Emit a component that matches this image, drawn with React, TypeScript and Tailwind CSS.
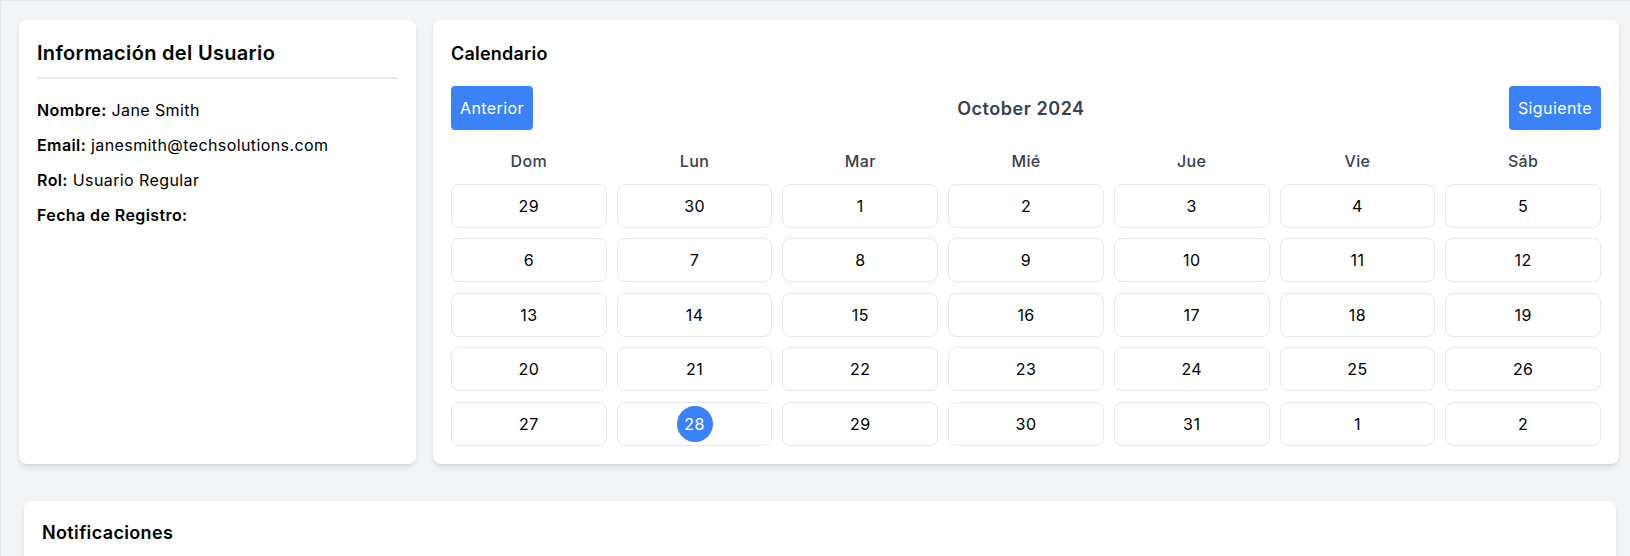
import React from "react";

const font = { fontFamily: "Inter, 'Noto Sans', sans-serif" };

const days = ["Dom", "Lun", "Mar", "Mié", "Jue", "Vie", "Sáb"];
const cells = [
  29, 30, 1, 2, 3, 4, 5,
  6, 7, 8, 9, 10, 11, 12,
  13, 14, 15, 16, 17, 18, 19,
  20, 21, 22, 23, 24, 25, 26,
  27, 28, 29, 30, 31, 1, 2,
];

export default function App() {
  return (
    <div
      className="min-h-screen bg-[#f3f4f6] border-t border-l border-[#e5e7eb] pt-[19px] pl-[18px] pr-[11px] text-black tracking-[0.025em]"
      style={font}
    >
      <div className="flex gap-[17px] items-stretch">
        <div className="w-[397px] shrink-0 bg-white rounded-lg shadow-md p-[18px]">
          <h2 className="text-[20px] leading-7 font-semibold tracking-[0.016em] pt-px pb-[10px] border-b-2 border-[#e5e7eb]">
            Información del Usuario
          </h2>
          <div className="mt-[19px] flex flex-col gap-[11px] text-[16px] leading-6">
            <p>
              <span className="font-semibold">Nombre:</span> Jane Smith
            </p>
            <p>
              <span className="font-semibold">Email:</span> janesmith@techsolutions.com
            </p>
            <p>
              <span className="font-semibold">Rol:</span> Usuario Regular
            </p>
            <p>
              <span className="font-semibold">Fecha de Registro:</span>
            </p>
          </div>
        </div>

        <div className="flex-1 bg-white rounded-lg shadow-md pt-[18px] px-[18px] pb-[18px]">
          <h2 className="text-[18px] leading-7 font-semibold tracking-[0.012em] pt-[2px]">Calendario</h2>
          <div className="mt-[18px] flex items-center justify-between">
            <button className="bg-[#3b82f6] text-white text-[16px] leading-6 px-[9px] py-2.5 rounded">
              Anterior
            </button>
            <div className="text-[18px] font-semibold text-[#374151] tracking-[0.03em]">October 2024</div>
            <button className="bg-[#3b82f6] text-white text-[16px] leading-6 px-[9px] py-2.5 rounded">
              Siguiente
            </button>
          </div>
          <div className="mt-[19px] grid grid-cols-7 gap-x-[10px] gap-y-[10.5px]">
            {days.map((d) => (
              <div key={d} className="h-6 flex items-center justify-center text-[16px] font-medium text-[#374151]">
                {d}
              </div>
            ))}
            {cells.map((c, i) => (
              <div
                key={i}
                className="h-11 border border-[#e5e7eb] rounded-lg flex items-center justify-center text-[16px]"
              >
                {i === 29 ? (
                  <span className="w-9 h-9 rounded-full bg-[#3b82f6] text-white flex items-center justify-center">
                    {c}
                  </span>
                ) : (
                  c
                )}
              </div>
            ))}
          </div>
        </div>
      </div>

      <div className="mt-[37px] ml-[5px] mr-[3px] bg-white rounded-lg shadow-md p-[18px] h-[200px]">
        <h2 className="text-[18px] leading-7 font-semibold tracking-[0.02em]">Notificaciones</h2>
      </div>
    </div>
  );
}
